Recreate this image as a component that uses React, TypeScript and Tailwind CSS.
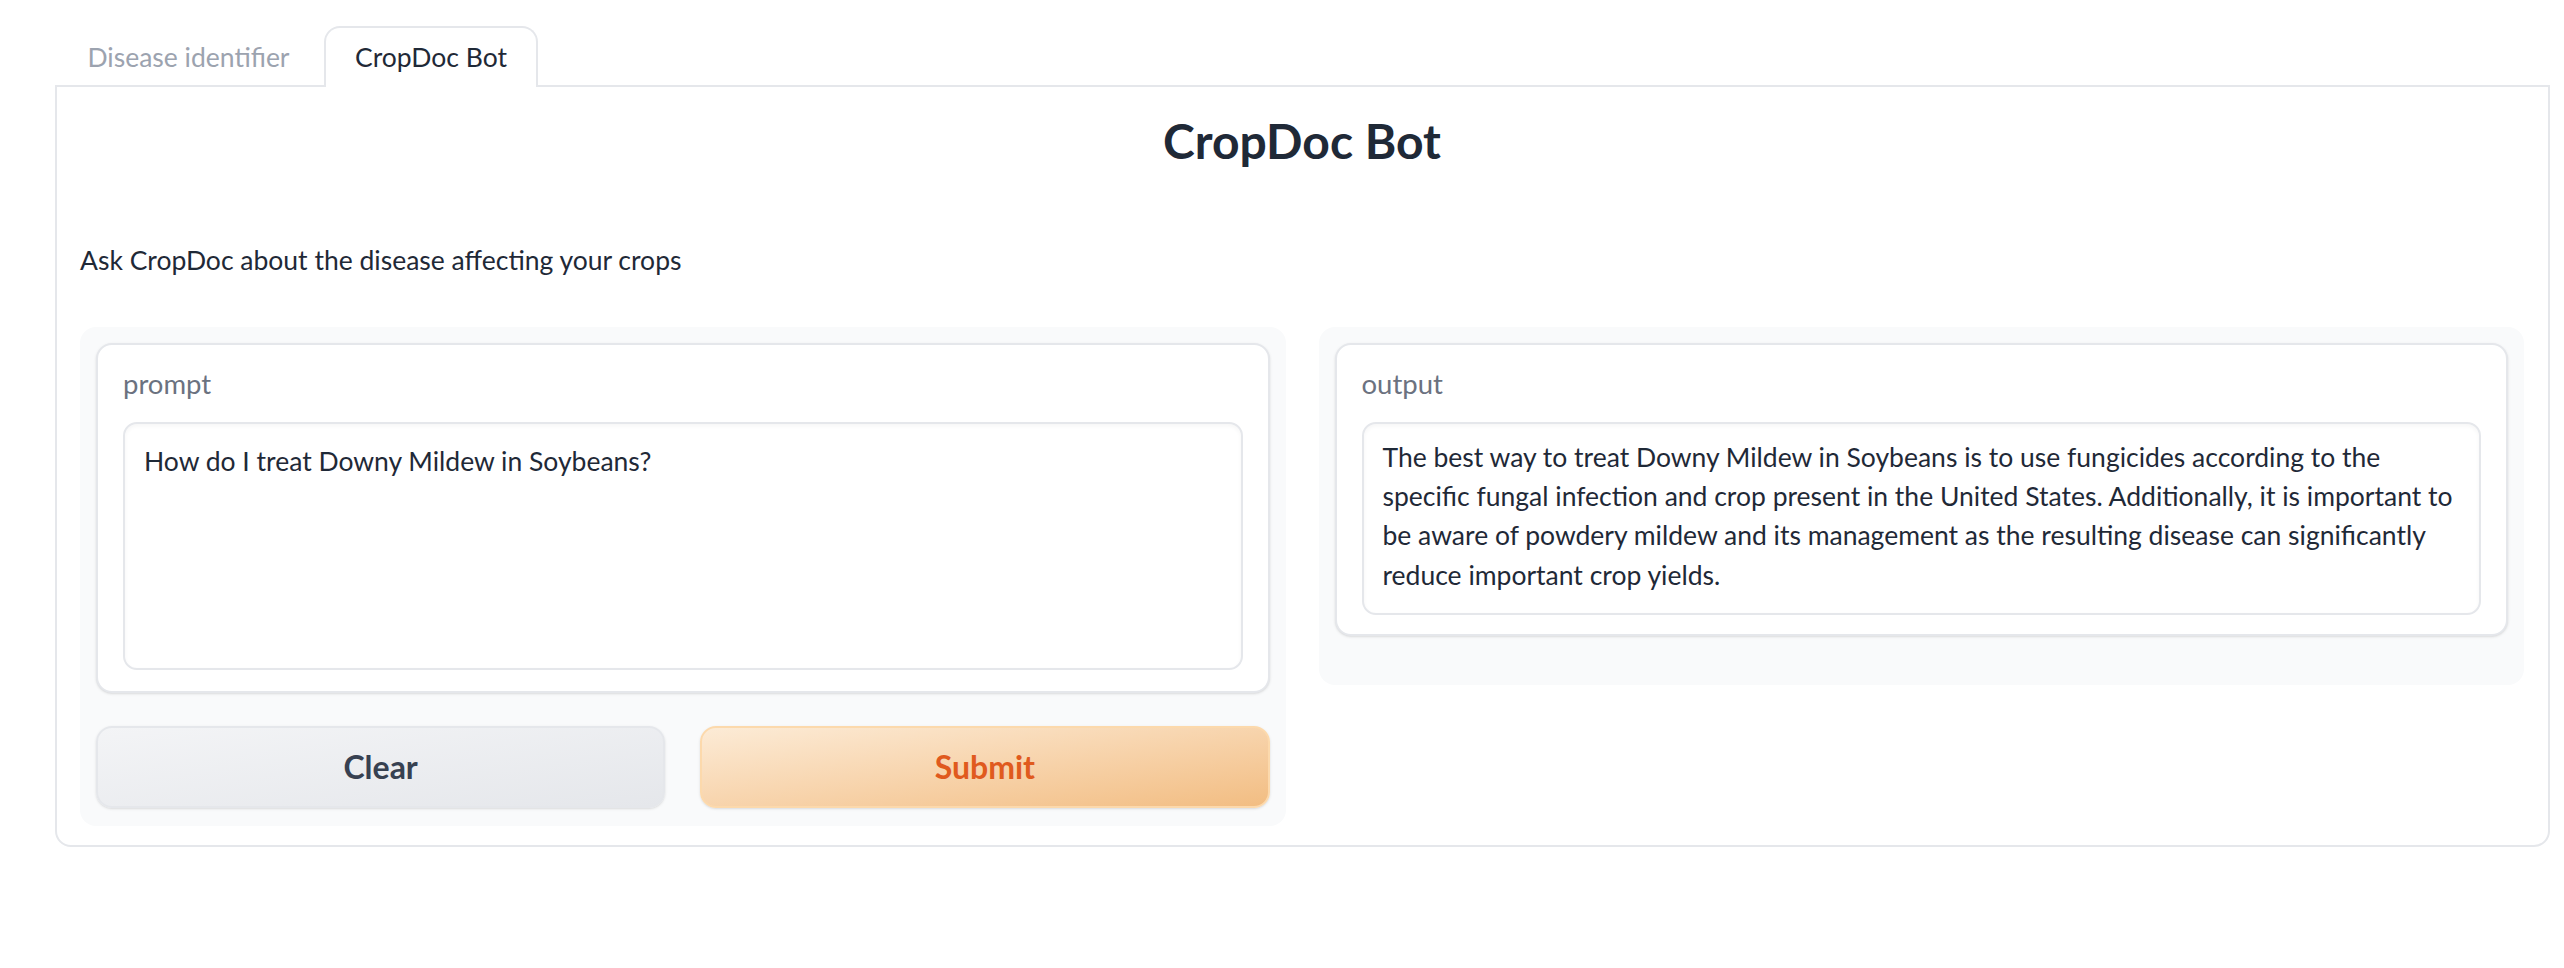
import React from 'react'

const outputLines = [
  'The best way to treat Downy Mildew in Soybeans is to use fungicides according to the',
  'specific fungal infection and crop present in the United States. Additionally, it is important to',
  'be aware of powdery mildew and its management as the resulting disease can significantly',
  'reduce important crop yields.',
]

const Tabs = () => {
  return (
    <div className="flex items-end -mb-[2px] relative z-10">
      <button className="w-[267px] h-[59px] text-[26.5px] text-[#9ca3af]">Disease identifier</button>
      <button className="w-[214px] h-[61px] ml-[2px] text-[26.5px] text-[#1f2937] bg-white border-2 border-b-0 border-[#e5e7eb] rounded-t-[16px]">
        CropDoc Bot
      </button>
    </div>
  )
}

const Label = ({ children }: { children: React.ReactNode }) => (
  <div className="text-[27.5px] leading-[42px] text-[#6b7280]">{children}</div>
)

export default function App() {
  return (
    <div className="min-h-[968px] bg-white font-['Lato',sans-serif] text-[#1f2937]">
      <div className="pl-[55px] pr-[14px] pt-[26px]">
        <Tabs />
        <div className="border-2 border-[#e5e7eb] rounded-b-[16px] pl-[23px] pr-[24px] pt-[25px] pb-[19px]">
          <h1 className="h-[58px] text-center text-[48px] leading-[58px] font-bold">CropDoc Bot</h1>
          <p className="mt-[69px] text-[26.5px] leading-[42px]">Ask CropDoc about the disease affecting your crops</p>

          <div className="mt-[46px] grid grid-cols-2 items-start gap-[33px]">
            {/* input column */}
            <div className="bg-[#f9fafb] rounded-[16px] p-[16px] pb-[18px]">
              <div className="bg-white border-2 border-[#e5e7eb] rounded-[16px] shadow-sm px-[25px] pt-[18px] pb-[21px]">
                <Label>prompt</Label>
                <div className="mt-[17px] h-[248px] border-2 border-[#e5e7eb] rounded-[14px] shadow-[inset_0_2px_4px_rgba(0,0,0,0.04)] px-[19px] py-[18px] text-[26.5px] leading-[39.2px]">
                  How do I treat Downy Mildew in Soybeans?
                </div>
              </div>
              <div className="mt-[33px] flex gap-[35px]">
                <button className="flex-1 h-[82px] rounded-[16px] border-2 border-[#e5e7eb] bg-gradient-to-br from-[#f3f4f6] to-[#e5e7eb] shadow-sm text-[32px] font-bold text-[#374151]">
                  Clear
                </button>
                <button className="flex-1 h-[82px] rounded-[16px] border-2 border-[#fcd9ac] bg-gradient-to-br from-[#fcebd6] to-[#f2bd82] shadow-sm text-[32px] font-bold text-[#e05a1e]">
                  Submit
                </button>
              </div>
            </div>

            {/* output column */}
            <div className="bg-[#f9fafb] rounded-[16px] p-[16px] pb-[49px]">
              <div className="bg-white border-2 border-[#e5e7eb] rounded-[16px] shadow-sm px-[25px] pt-[18px] pb-[19px]">
                <Label>output</Label>
                <div className="mt-[17px] border-2 border-[#e5e7eb] rounded-[14px] shadow-[inset_0_2px_4px_rgba(0,0,0,0.04)] px-[19px] pt-[14px] pb-[18px] text-[26.5px] leading-[39.2px]">
                  {outputLines.map((line) => (
                    <div key={line} className="whitespace-nowrap">
                      {line}
                    </div>
                  ))}
                </div>
              </div>
            </div>
          </div>
        </div>
      </div>
    </div>
  )
}
